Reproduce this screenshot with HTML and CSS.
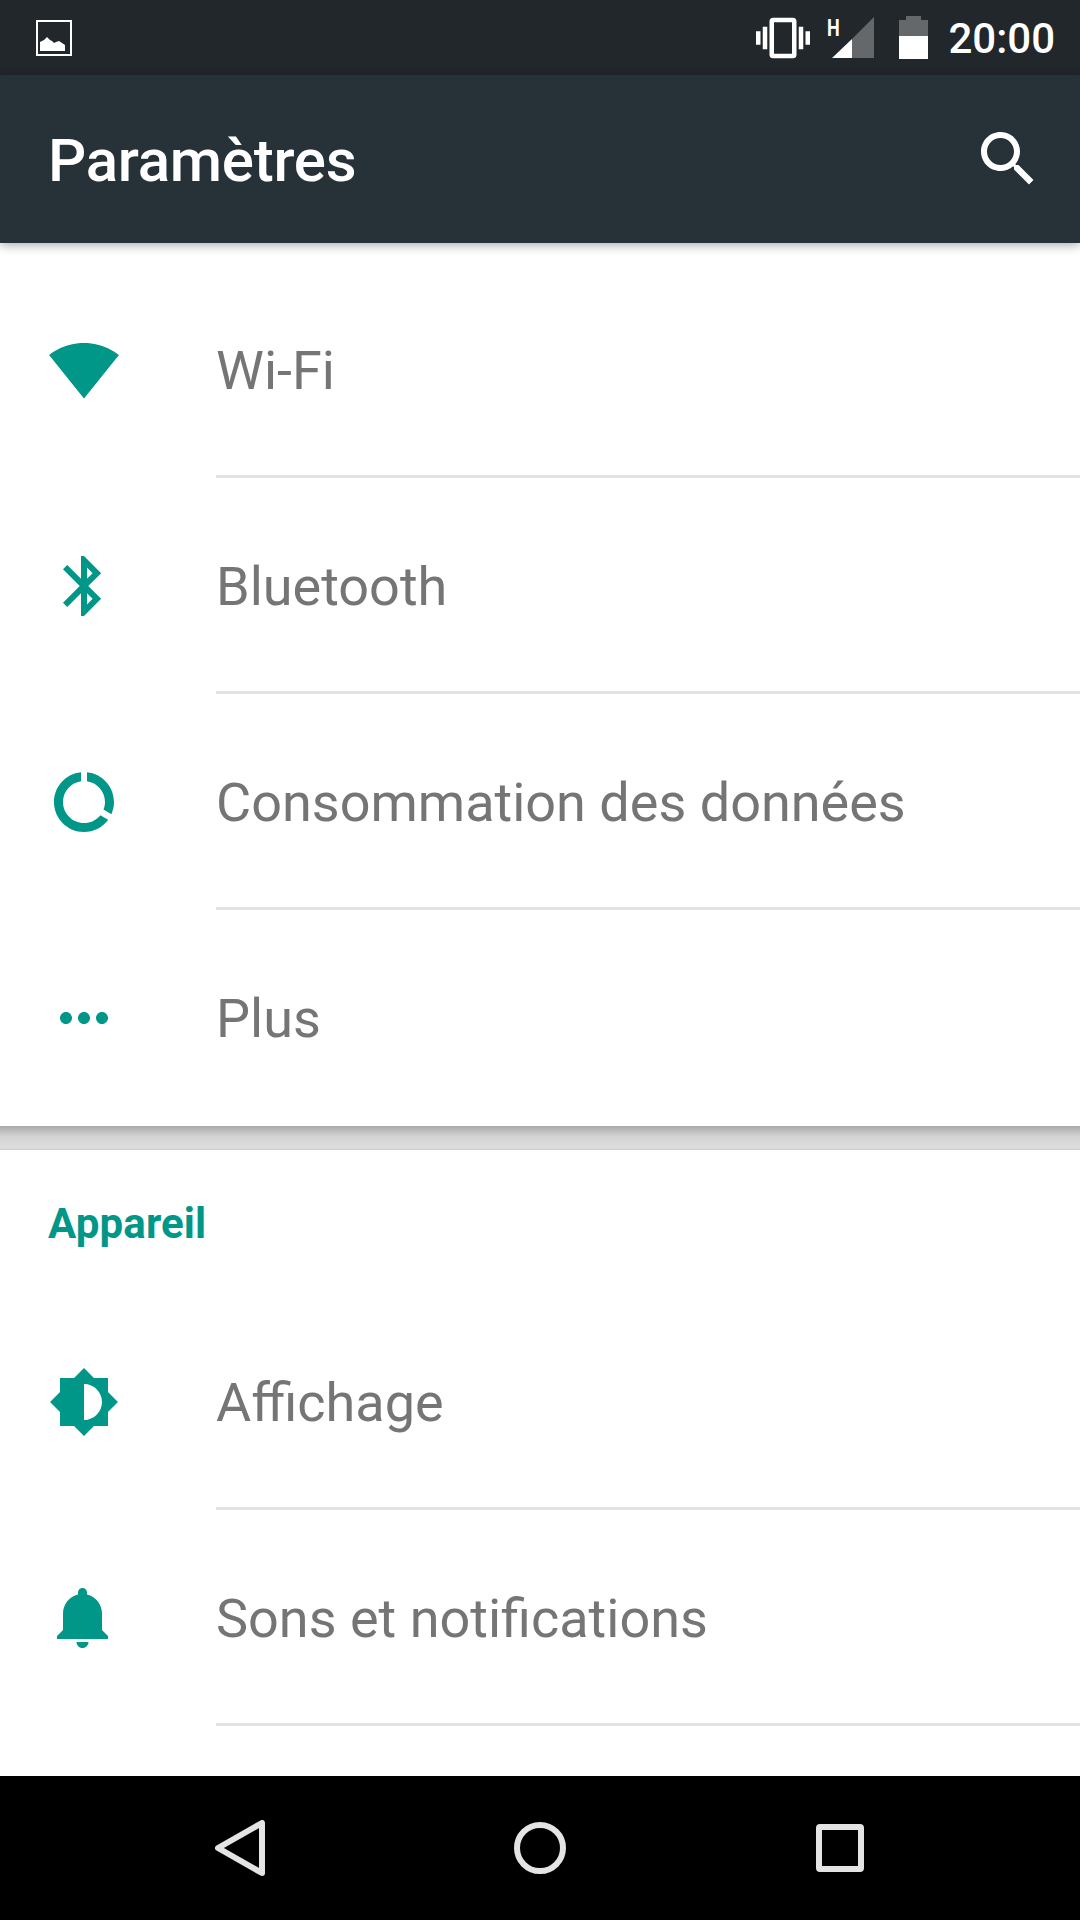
FILE: index.html
```html
<!DOCTYPE html>
<html lang="fr">
<head>
<meta charset="utf-8">
<title>Paramètres</title>
<link rel="stylesheet" href="styles.css">
</head>
<body>
<div class="screen">
  <header class="status">
    <svg class="pic" viewBox="0 0 36 36"><path class="w" fill-rule="evenodd" d="M0 0h36v36H0zM2 2v32h32V2z"/><path class="w" d="M4 31V22l4-2 3-3 3 3 2 1 2 2 2-1 3-1 3 2 3 2v6z"/></svg>
    <div class="status-right">
      <svg class="vib" viewBox="0 0 24 24"><path class="w" d="M0 15h2V9H0v6zm3 2h2V7H3v10zm19-8v6h2V9h-2zm-3 8h2V7h-2v10zM16.5 3h-9C6.67 3 6 3.67 6 4.5v15c0 .83.67 1.5 1.5 1.5h9c.83 0 1.5-.67 1.5-1.5v-15c0-.83-.67-1.5-1.5-1.5zM16 19H8V5h8v14z"/></svg>
      <div class="signal">
        <span class="h">H</span>
        <svg class="sig" viewBox="0 0 47 41"><path class="dim" d="M47 0v41H25V22z"/><path class="w" d="M5 41l20-19v19z"/></svg>
      </div>
      <svg class="bat" viewBox="0 0 29 43"><path class="dim" d="M7 0h15v4h7v16H0V4h7z"/><path class="w" d="M0 20h29v23H0z"/></svg>
      <span class="time">20:00</span>
    </div>
  </header>
  <div class="toolbar">
    <h1 class="title">Paramètres</h1>
    <svg class="icon" viewBox="0 0 24 24"><path class="w" d="M15.5 14h-.79l-.28-.27C15.41 12.59 16 11.11 16 9.5 16 5.91 13.09 3 9.5 3S3 5.91 3 9.5 5.91 16 9.5 16c1.61 0 3.09-.59 4.23-1.57l.27.28v.79l5 4.99L20.49 19l-4.99-5zm-6 0C7.01 14 5 11.99 5 9.5S7.01 5 9.5 5 14 7.01 14 9.5 11.99 14 9.5 14z"/></svg>
  </div>
  <main class="content">
    <section class="group first">
      <div class="row"><svg class="icon" viewBox="0 0 24 24"><path class="t" d="M12.01 21.49L23.64 7c-.45-.34-4.93-4-11.64-4C5.28 3 .81 6.66.36 7l11.63 14.49.01.01.01-.01z"/></svg><div class="label line">Wi-Fi</div></div>
      <div class="row"><svg class="icon" viewBox="0 0 24 24"><path class="t" d="M17.71 7.71L12 2h-1v7.59L6.41 5 5 6.41 10.59 12 5 17.59 6.41 19 11 14.41V22h1l5.71-5.71-4.3-4.29 4.3-4.29zM13 5.83l1.88 1.88L13 9.59V5.83zm1.88 10.46L13 18.17v-3.76l1.88 1.88z"/></svg><div class="label line">Bluetooth</div></div>
      <div class="row"><svg class="icon" viewBox="0 0 24 24"><path class="t" d="M13 2.05v3.03c3.39.49 6 3.39 6 6.92 0 .9-.18 1.75-.48 2.54l2.6 1.53c.56-1.24.88-2.62.88-4.07 0-5.18-3.95-9.45-9-9.95zM12 19c-3.87 0-7-3.13-7-7 0-3.53 2.61-6.43 6-6.92V2.05c-5.06.5-9 4.76-9 9.95 0 5.52 4.47 10 9.99 10 3.31 0 6.24-1.61 8.06-4.09l-2.6-1.53C16.17 17.98 14.21 19 12 19z"/></svg><div class="label line">Consommation des données</div></div>
      <div class="row"><svg class="icon" viewBox="0 0 24 24"><path class="t" d="M6 10c-1.100 0-2 .9-2 2s.9 2 2 2 2-.9 2-2-.9-2-2-2zm12 0c-1.100 0-2 .9-2 2s.9 2 2 2 2-.9 2-2-.9-2-2-2zm-6 0c-1.100 0-2 .9-2 2s.9 2 2 2 2-.9 2-2-.9-2-2-2z"/></svg><div class="label">Plus</div></div>
    </section>
    <div class="divider"></div>
    <section class="group">
      <h2 class="section-title">Appareil</h2>
      <div class="row"><svg class="icon" viewBox="0 0 24 24"><path class="t" d="M20 15.310L23.310 12 20 8.690V4h-4.690L12 .69 8.690 4H4v4.690L.69 12 4 15.310V20h4.690L12 23.310 15.310 20H20v-4.690zM12 18V6c3.310 0 6 2.690 6 6s-2.690 6-6 6z"/></svg><div class="label line">Affichage</div></div>
      <div class="row"><svg class="icon" viewBox="0 0 24 24"><path class="t" d="M11.500 22c1.100 0 2-.9 2-2h-4c0 1.100.9 2 2 2zm6.500-6v-5.500c0-3.070-2.130-5.640-5-6.320V3.500c0-.83-.67-1.500-1.500-1.500S10 2.670 10 3.500v.68c-2.870.68-5 3.250-5 6.320V16l-2 2v1h17v-1l-2-2z"/></svg><div class="label line">Sons et notifications</div></div>
    </section>
  </main>
  <nav class="navbar">
    <svg class="nav-back" viewBox="0 0 50 56"><path class="nav-stroke" d="M47 3v50L3 28z"/></svg>
    <svg class="nav-home" viewBox="0 0 52 52"><circle class="nav-stroke" cx="26" cy="26" r="23"/></svg>
    <svg class="nav-recent" viewBox="0 0 48 48"><rect class="nav-stroke" x="3" y="3" width="42" height="42" rx="1"/></svg>
  </nav>
</div>
</body>
</html>
```

FILE: styles.css
```css
* { box-sizing: border-box; }
html, body { margin: 0; padding: 0; }
body { width: 1080px; height: 1920px; overflow: hidden; font-family: Roboto, "Noto Sans", sans-serif; background: #fff; }
.screen { width: 1080px; height: 1920px; display: flex; flex-direction: column; }
.w { fill: #fff; }
.dim { fill: #fff; opacity: .3; }
.t { fill: #009688; }

.status { height: 75px; flex: none; background: #21272b; display: flex; align-items: center; justify-content: space-between; padding: 0 25px 0 36px; }
.pic { width: 36px; height: 36px; display: block; margin-top: 1px; }
.status-right { display: flex; align-items: center; }
.vib { width: 54px; height: 54px; display: block; margin-right: 17px; }
.signal { position: relative; width: 47px; height: 41px; margin-right: 25px; }
.sig { width: 47px; height: 41px; display: block; }
.h { position: absolute; left: 0; top: -1px; font-size: 24px; line-height: 24px; font-weight: 700; color: #fff; transform: scaleX(.75); transform-origin: 0 50%; }
.bat { width: 29px; height: 43px; display: block; margin-right: 20px; }
.time { color: #fff; font-size: 42px; line-height: 50px; font-weight: 500; padding-top: 2px; }

.toolbar { height: 168px; flex: none; background: #263238; display: flex; align-items: center; justify-content: space-between; padding: 0 36px 0 48px; position: relative; z-index: 1; box-shadow: 0 2px 10px rgba(0,0,0,.35); }
.title { margin: 0; padding-top: 4px; color: #fff; font-size: 60px; font-weight: 500; line-height: 72px; letter-spacing: -.25px; }
.icon { width: 72px; height: 72px; display: block; flex: none; }

.content { flex: 1; display: flex; flex-direction: column; overflow: hidden; }
.group.first { padding-top: 19px; }
.row { height: 216px; display: flex; align-items: center; padding-left: 48px; }
.row .icon { margin-right: 96px; }
.label { flex: 1; align-self: stretch; display: flex; align-items: center; padding-top: 1px; font-size: 54px; color: #757575; }
.line { padding-top: 4px; border-bottom: 3px solid #e2e2e2; }
.divider { height: 24px; flex: none; background: linear-gradient(#aaaaaa, #d4d4d4 45%, #dedede 90%, #cccccc); }
.section-title { margin: 0; height: 144px; padding: 49px 0 0 48px; font-size: 42px; line-height: 50px; font-weight: 700; letter-spacing: .15px; color: #009688; }

.navbar { height: 144px; flex: none; background: #000; position: relative; display: flex; align-items: center; justify-content: center; }
.nav-stroke { fill: none; stroke: #e4e4e4; stroke-width: 6; stroke-linejoin: round; }
.nav-back { width: 50px; height: 56px; position: absolute; left: 215px; top: 44px; }
.nav-home { width: 52px; height: 52px; position: absolute; left: 514px; top: 46px; }
.nav-recent { width: 48px; height: 48px; position: absolute; left: 816px; top: 48px; }
```
